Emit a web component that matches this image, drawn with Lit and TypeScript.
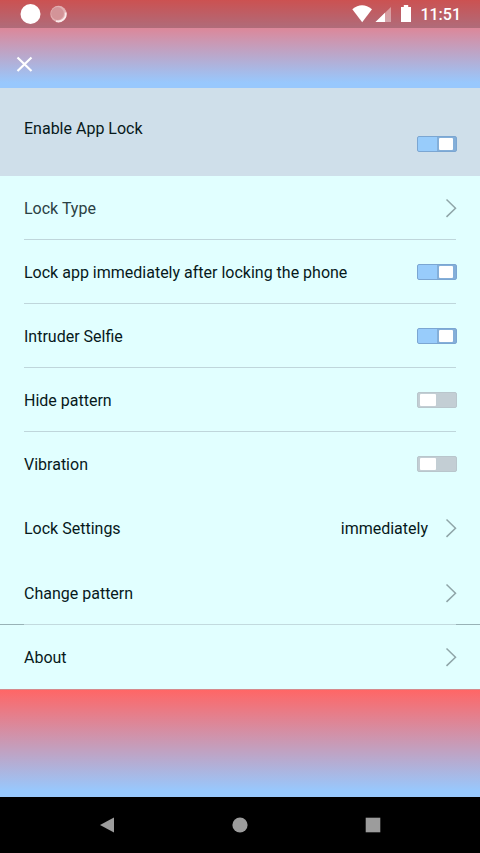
import { LitElement, html, css, svg } from "lit";
import { customElement, property } from "lit/decorators.js";
import { classMap } from "lit/directives/class-map.js";

type Row = {
  id: string;
  label: string;
  kind: "toggle" | "link";
  on?: boolean;
  value?: string;
  muted?: boolean;
  divider?: "inset" | "full";
};

const ROWS: Row[] = [
  { id: "type", label: "Lock Type", kind: "link", muted: true, divider: "inset" },
  { id: "instant", label: "Lock app immediately after locking the phone", kind: "toggle", on: true, divider: "inset" },
  { id: "selfie", label: "Intruder Selfie", kind: "toggle", on: true, divider: "inset" },
  { id: "hide", label: "Hide pattern", kind: "toggle", on: false, divider: "inset" },
  { id: "vibration", label: "Vibration", kind: "toggle", on: false },
  { id: "settings", label: "Lock Settings", kind: "link", value: "immediately" },
  { id: "change", label: "Change pattern", kind: "link", divider: "full" },
  { id: "about", label: "About", kind: "link" },
];

@customElement("status-bar")
export class StatusBar extends LitElement {
  static styles = css`
    :host {
      display: flex;
      align-items: center;
      justify-content: space-between;
      height: 28px;
      padding: 0 19px 0 20px;
      background: rgba(0, 0, 0, 0.2);
      color: #fff;
      font-size: 16px;
      font-weight: 500;
      line-height: 28px;
    }
    .group {
      display: flex;
      align-items: center;
    }
    svg {
      display: block;
    }
    .time {
      margin-left: 8px;
      padding-top: 2px;
    }
  `;
  render() {
    return html`
      <div class="group">
        <svg width="48" height="22" viewBox="0 0 48 22" aria-hidden="true">
          <circle cx="10.5" cy="11" r="10" fill="#fff" />
          <circle cx="38.5" cy="11" r="8.2" fill="#e3b0b2" />
          <circle cx="37.5" cy="10.5" r="6.4" fill="#d39498" />
          <path d="M45.6 9.500a7.500 7.500 0 0 1-9.600 8.600" fill="none" stroke="#fbecec" stroke-width="1.800" />
        </svg>
      </div>
      <div class="group">
        <svg width="60" height="22" viewBox="0 0 60 22" aria-hidden="true">
          <path d="M.3 6.200Q10-1.800 20 6.200L10.200 19.300Z" fill="#fff" />
          <path d="M39 4v15H23.500Z" fill="#fff" fill-opacity=".4" />
          <path d="M33 9.800V19H23.500Z" fill="#fff" />
          <path d="M51.800 2h4.400v2H59v15H49V4h2.800Z" fill="#fff" />
        </svg>
        <span class="time">11:51</span>
      </div>
    `;
  }
}

@customElement("settings-row")
export class SettingsRow extends LitElement {
  @property({ attribute: false }) row!: Row;
  @property({ type: Boolean, reflect: true }) featured = false;

  static styles = css`
    :host {
      display: block;
    }
    .row {
      display: flex;
      align-items: center;
      box-sizing: border-box;
      width: 100%;
      min-height: 64px;
      margin: 0;
      padding: 0 23px 0 24px;
      border: 0;
      background: none;
      color: #07191b;
      font: inherit;
      text-align: left;
    }
    .muted {
      color: #2b4144;
    }
    .label {
      flex: 1;
      padding-top: 2px;
    }
    .value {
      margin-right: 17px;
      padding-top: 2px;
    }
    .chevron {
      display: block;
    }
    .inset {
      background: linear-gradient(#bfd6db, #bfd6db) center bottom / calc(100% - 48px) 1px no-repeat;
    }
    .full {
      min-height: 65px;
      background: linear-gradient(to right, #98b2b6 24px, #c2dade 24px calc(100% - 24px), #98b2b6 calc(100% - 24px))
        center bottom / 100% 1px no-repeat;
    }
    .featured {
      min-height: 88px;
      align-items: flex-start;
      padding-top: 27px;
      background: #cfdfea;
    }
    .featured .switch {
      margin-top: 21px;
    }
    .switch {
      appearance: none;
      display: flex;
      box-sizing: border-box;
      width: 40px;
      height: 16px;
      margin: 0;
      padding: 1px 2px;
      border: 1px solid #b9c6cc;
      border-radius: 2px;
      background: #c3ced4;
    }
    .switch::before {
      content: "";
      width: 16px;
      height: 12px;
      border-radius: 1px;
      background: #fff;
    }
    .switch:checked {
      justify-content: flex-end;
      padding-right: 3px;
      border-color: #7ba6d2;
      background: linear-gradient(to right, #98ccfb 19px, #84afd9 19px);
    }
    .switch:checked::before {
      width: 14px;
    }
  `;

  render() {
    const r = this.row;
    const classes = classMap({
      row: true,
      muted: !!r.muted,
      inset: r.divider === "inset",
      full: r.divider === "full",
      featured: this.featured,
    });
    if (r.kind === "toggle") {
      return html`<label class=${classes}>
        <span class="label">${r.label}</span>
        <input class="switch" type="checkbox" .checked=${!!r.on} />
      </label>`;
    }
    return html`<button class=${classes} type="button">
      <span class="label">${r.label}</span>
      ${r.value ? html`<span class="value">${r.value}</span>` : ""}
      <svg class="chevron" width="12" height="20" viewBox="0 0 12 20" aria-hidden="true">
        ${svg`<path d="M1.500 1.500l9 8.700-9 8.700" fill="none" stroke="#8fa5a8" stroke-width="1.500" />`}
      </svg>
    </button>`;
  }
}

@customElement("app-root")
export class AppRoot extends LitElement {
  static styles = css`
    :host {
      display: flex;
      flex-direction: column;
      min-height: 100vh;
      font-family: Roboto, "Liberation Sans", sans-serif;
      font-size: 16px;
      line-height: 24px;
    }
    .header {
      background: linear-gradient(#ff6666, #98c8fd 94%);
    }
    .toolbar {
      display: flex;
      align-items: center;
      box-sizing: border-box;
      height: 60px;
      padding: 12px 12px 0;
    }
    .close {
      display: flex;
      padding: 4px;
      border: 0;
      background: none;
    }
    .list {
      background: #e1ffff;
    }
    .footer {
      flex: 1;
      border-top: 1px solid #d58a8c;
      background: linear-gradient(#ff6666, #98c8fd 94%);
    }
    .nav {
      display: grid;
      grid-template-columns: repeat(3, 1fr);
      place-items: center;
      height: 56px;
      padding: 0 41px;
      background: #000;
    }
    .nav button {
      display: flex;
      padding: 0;
      border: 0;
      background: none;
    }
  `;

  render() {
    return html`
      <header class="header">
        <status-bar></status-bar>
        <div class="toolbar">
          <button class="close" type="button" aria-label="Close">
            <svg width="17" height="17" viewBox="0 0 17 17">
              <path d="M1.500 1.500l14 13.500M15.500 1.500l-14 13.500" stroke="#fff" stroke-width="2.200" />
            </svg>
          </button>
        </div>
      </header>
      <main class="list">
        <settings-row
          featured
          .row=${{ id: "enable", label: "Enable App Lock", kind: "toggle", on: true } as Row}
        ></settings-row>
        ${ROWS.map((r) => html`<settings-row .row=${r}></settings-row>`)}
      </main>
      <div class="footer"></div>
      <nav class="nav">
        <button type="button" aria-label="Back">
          <svg width="16" height="16" viewBox="0 0 16 16"><path d="M1 8L15 .5v15Z" fill="#9c9c9c" /></svg>
        </button>
        <button type="button" aria-label="Home">
          <svg width="16" height="16" viewBox="0 0 16 16"><circle cx="8" cy="8" r="7.600" fill="#9c9c9c" /></svg>
        </button>
        <button type="button" aria-label="Recent apps">
          <svg width="16" height="16" viewBox="0 0 16 16"><rect x=".7" y=".7" width="14.600" height="14.600" fill="#9c9c9c" /></svg>
        </button>
      </nav>
    `;
  }
}
